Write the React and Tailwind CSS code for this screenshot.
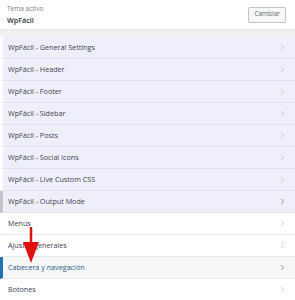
import { ChevronRight } from 'lucide-react'

const plugin = [
  'WpFácil - General Settings',
  'WpFácil - Header',
  'WpFácil - Footer',
  'WpFácil - Sidebar',
  'WpFácil - Posts',
  'WpFácil - Social Icons',
  'WpFácil - Live Custom CSS',
  'WpFácil - Output Mode',
]

const core = ['Menús', 'Ajustes generales', 'Cabecera y navegación', 'Botones']

function Row({ label, tone, active, hover }) {
  const bg = active ? 'bg-[#f6f7f7]' : tone === 'lav' ? 'bg-[#efeffb]' : 'bg-white'
  const edge = active ? 'border-l-[#2271b1]' : hover ? 'border-l-[#c3c4c7]' : 'border-l-white'
  const sep = tone === 'lav' ? 'border-b-[#e3e3ef]' : 'border-b-[#e6e7e8]'
  return (
    <div className={`flex items-center h-[22px] border-l-[3px] border-b ${edge} ${sep} ${bg}`}>
      <span className={`flex-1 pl-[5px] text-[7.2px] leading-none ${active ? 'text-[#2c5b86]' : 'text-[#3f3f52]'}`}>
        {label}
      </span>
      <ChevronRight
        size={9}
        strokeWidth={1.75}
        className={`mr-[8px] ${active || hover ? 'text-[#50575e]' : 'text-[#b4b6b9]'}`}
      />
    </div>
  )
}

export default function App() {
  return (
    <div className="relative w-[295px] h-[300px] overflow-hidden bg-white" style={{ fontFamily: '"Open Sans", "Noto Sans", sans-serif' }}>
      <div className="flex items-center h-[30px] px-[7px] border-b border-[#e6e7e8] bg-white">
        <div className="flex-1 flex flex-col gap-[4px] pt-[1px]">
          <span className="text-[6.5px] leading-none text-[#787c82]">Tema activo</span>
          <span className="text-[7.2px] leading-none font-semibold text-[#2c3338]">WpFácil</span>
        </div>
        <button className="h-[16px] px-[5px] mr-[2px] text-[6.5px] leading-none text-[#646970] bg-[#f6f7f7] border border-[#c3c4c7] rounded-[2px]">
          Cambiar
        </button>
      </div>
      <div className="h-[7px] bg-[#f0f0f1]" />
      <div className="flex flex-col">
        {plugin.map((l, i) => (
          <Row key={l} label={l} tone="lav" hover={i === plugin.length - 1} />
        ))}
        {core.map((l, i) => (
          <Row key={l} label={l} active={i === 2} />
        ))}
      </div>
      <svg className="absolute left-[22px] top-[226px] pointer-events-none" width="18" height="38" viewBox="0 0 18 38">
        <line x1="9" y1="1" x2="9" y2="22" stroke="#e01010" strokeWidth="2.5" />
        <polygon points="1,16 17,16 9,37" fill="#e01010" />
      </svg>
    </div>
  )
}
